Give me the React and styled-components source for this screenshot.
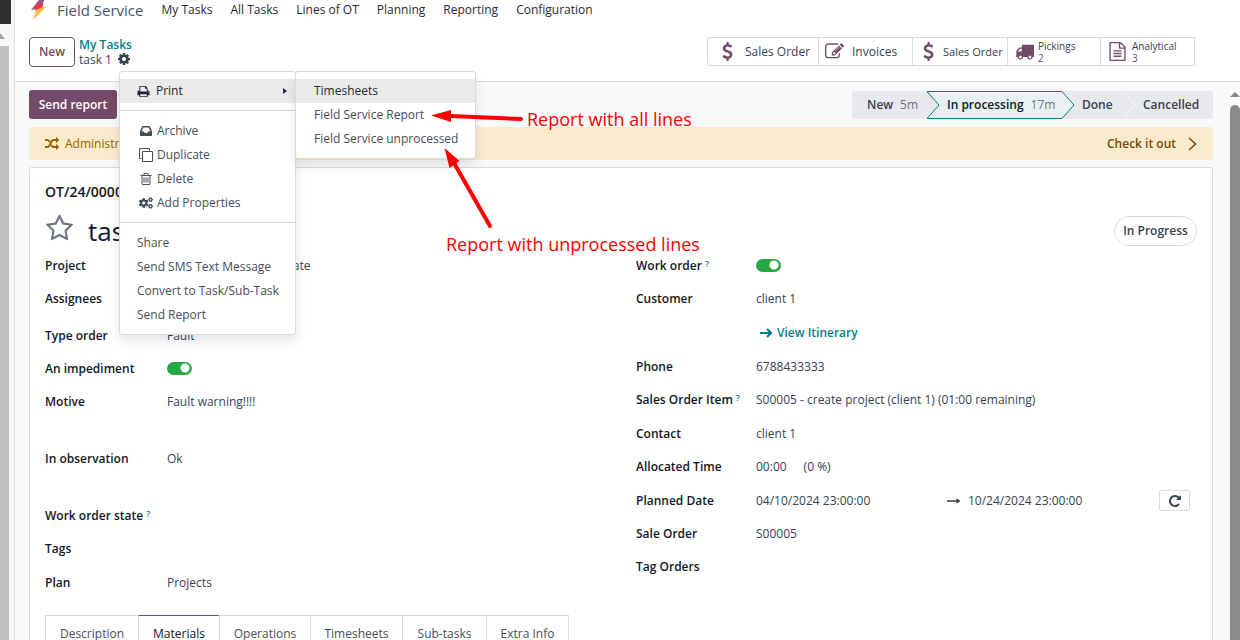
import React from "react";
import styled, { createGlobalStyle, css } from "styled-components";
import { FaCogs } from "react-icons/fa";

const GlobalStyle = createGlobalStyle`
  *, *::before, *::after { box-sizing: border-box; }
  body { margin: 0; background: #fff; }
  body, button, input { font-family: "Open Sans", "Noto Sans", sans-serif; font-size: 12px; line-height: 16px; color: #374151; }
  button { margin: 0; padding: 0; border: 0; background: none; cursor: pointer; white-space: nowrap; }
  a { color: inherit; text-decoration: none; }
  svg { display: block; flex: none; }
`;

const PATHS = {
  usd: "M1362 1185q0 153-99.5 263.5t-258.5 136.5v175q0 14-9 23t-23 9h-135q-13 0-22.5-9.5t-9.5-22.5v-175q-66-9-127.5-31t-101.5-44.5-74-48-46.5-37.5-17.5-18q-17-21-2-41l103-135q7-10 23-12 15-2 24 9l2 2q113 99 243 125 37 8 74 8 81 0 142.5-43t61.5-122q0-28-15-53t-33.5-42-58.5-37.5-66-32-80-32.5q-39-16-61.5-25t-61.5-26.5-62.5-31-56.5-35.5-53.5-42.5-43.5-49-35.5-58-21-66.5-8.5-78q0-138 98-242t255-134v-180q0-13 9.5-22.5t22.5-9.5h135q14 0 23 9t9 23v176q57 6 110.5 23t87 33.5 63.5 37.5 39 29 15 14q17 18 5 38l-81 146q-8 15-23 16-14 3-27-7-3-3-14.5-12t-39-26.5-58.5-32-74.5-26-85.5-11.5q-95 0-155 43t-60 111q0 26 8.5 48t29.5 41.5 39.5 33 56 31 60.5 27 70 27.5q53 20 81 31.5t76 35 75.5 42.5 62 50 53 63.5 31.5 76.5 13 94z",
  edit: "M888 1184l116-116-152-152-116 116v56h96v96h56zm440-720q-16-16-33 1l-350 350q-17 17-1 33t33-1l350-350q17-17 1-33zm80 594v190q0 119-84.5 203.5t-203.5 84.5h-832q-119 0-203.5-84.5t-84.5-203.5v-832q0-119 84.5-203.5t203.5-84.5h832q63 0 117 25 15 7 18 23 3 17-9 29l-49 49q-14 14-32 8-23-6-45-6h-832q-66 0-113 47t-47 113v832q0 66 47 113t113 47h832q66 0 113-47t47-113v-126q0-13 9-22l64-64q15-15 35-7t20 29zm-96-738l288 288-672 672h-288v-288zm444 132l-92 92-288-288 92-92q28-28 68-28t68 28l152 152q28 28 28 68t-28 68z",
  truck: "M640 1408q0-52-38-90t-90-38-90 38-38 90 38 90 90 38 90-38 38-90zm-384-512h384v-256h-158q-13 0-22 9l-195 195q-9 9-9 22v30zm1280 512q0-52-38-90t-90-38-90 38-38 90 38 90 90 38 90-38 38-90zm256-1088v1024q0 15-4 26.5t-13.5 18.5-16.5 11.5-23.5 6-22.5 2-25.5 0-22.5-.5q0 106-75 181t-181 75-181-75-75-181h-384q0 106-75 181t-181 75-181-75-75-181h-64q-3 0-22.5.5t-25.5 0-22.5-2-23.5-6-16.5-11.5-13.5-18.5-4-26.5q0-26 19-45t45-19v-320q0-8-.5-35t0-38 2.5-34.5 6.5-37 14-30.5 22.5-30l198-198q19-19 50.5-32t58.5-13h160v-192q0-26 19-45t45-19h1024q26 0 45 19t19 45z",
  file: "M1596 380q28 28 48 76t20 88v1152q0 40-28 68t-68 28h-1344q-40 0-68-28t-28-68v-1600q0-40 28-68t68-28h896q40 0 88 20t76 48zm-444-244v376h376q-10-29-22-41l-313-313q-12-12-41-22zm384 1528v-1024h-416q-40 0-68-28t-28-68v-416h-768v1536h1280zm-1024-864q0-14 9-23t23-9h704q14 0 23 9t9 23v64q0 14-9 23t-23 9h-704q-14 0-23-9t-9-23v-64zm736 224q14 0 23 9t9 23v64q0 14-9 23t-23 9h-704q-14 0-23-9t-9-23v-64q0-14 9-23t23-9h704zm0 256q14 0 23 9t9 23v64q0 14-9 23t-23 9h-704q-14 0-23-9t-9-23v-64q0-14 9-23t23-9h704z",
  cog: "M1152 896q0-106-75-181t-181-75-181 75-75 181 75 181 181 75 181-75 75-181zm512-109v222q0 12-8 23t-20 13l-185 28q-19 54-39 91 35 50 107 138 10 12 10 25t-9 23q-27 37-99 108t-94 71q-12 0-26-9l-138-108q-44 23-91 38-16 136-29 186-7 28-36 28h-222q-14 0-24.5-8.5t-11.5-21.5l-28-184q-49-16-90-37l-141 107q-10 9-25 9-14 0-25-11-126-114-165-168-7-10-7-23 0-12 8-23 15-21 51-66.5t54-70.5q-27-50-41-99l-183-27q-13-2-21-12.5t-8-23.5v-222q0-12 8-23t19-13l186-28q14-46 39-92-40-57-107-138-10-12-10-24 0-10 9-23 26-36 98.5-107.5t94.5-71.5q13 0 26 10l138 107q44-23 91-38 16-136 29-186 7-28 36-28h222q14 0 24.5 8.5t11.5 21.5l28 184q49 16 90 37l142-107q9-9 24-9 13 0 25 10 129 119 165 170 7 8 7 22 0 12-8 23-15 21-51 66.5t-54 70.5q26 50 41 98l183 28q13 2 21 12.5t8 23.5z",
  print: "M448 1536h896v-256h-896v256zm0-640h896v-384h-160q-40 0-68-28t-28-68v-160h-640v640zm1152 64q0-26-19-45t-45-19-45 19-19 45 19 45 45 19 45-19 19-45zm128 0v416q0 13-9.5 22.5t-22.5 9.5h-224v160q0 40-28 68t-68 28h-960q-40 0-68-28t-28-68v-160h-224q-13 0-22.5-9.5t-9.5-22.5v-416q0-79 56.5-135.5t135.5-56.5h64v-544q0-40 28-68t68-28h672q40 0 88 20t76 48l152 152q28 28 48 76t20 88v256h64q79 0 135.5 56.5t56.5 135.5z",
  inbox: "M1151 960h316q-1-3-2.5-8t-2.5-8l-212-496h-708l-212 496q-1 2-2.5 8t-2.5 8h316l95 192h320zm513 30v482q0 26-19 45t-45 19h-1408q-26 0-45-19t-19-45v-482q0-62 25-123l238-552q10-25 36.5-42t52.5-17h832q26 0 52.5 17t36.5 42l238 552q25 61 25 123z",
  clone: "M1664 1632v-1088q0-13-9.5-22.5t-22.5-9.5h-1088q-13 0-22.5 9.5t-9.5 22.5v1088q0 13 9.5 22.5t22.5 9.5h1088q13 0 22.5-9.5t9.5-22.5zm128-1088v1088q0 66-47 113t-113 47h-1088q-66 0-113-47t-47-113v-1088q0-66 47-113t113-47h1088q66 0 113 47t47 113zm-384-384v160h-128v-160q0-13-9.5-22.5t-22.5-9.5h-1088q-13 0-22.5 9.5t-9.5 22.5v1088q0 13 9.5 22.5t22.5 9.5h160v128h-160q-66 0-113-47t-47-113v-1088q0-66 47-113t113-47h1088q66 0 113 47t47 113z",
  trash: "M704 736v576q0 14-9 23t-23 9h-64q-14 0-23-9t-9-23v-576q0-14 9-23t23-9h64q14 0 23 9t9 23zm256 0v576q0 14-9 23t-23 9h-64q-14 0-23-9t-9-23v-576q0-14 9-23t23-9h64q14 0 23 9t9 23zm256 0v576q0 14-9 23t-23 9h-64q-14 0-23-9t-9-23v-576q0-14 9-23t23-9h64q14 0 23 9t9 23zm128 724v-948h-896v948q0 22 7 40.5t14.5 27 10.5 8.5h832q3 0 10.5-8.5t14.5-27 7-40.5zm-672-1076h448l-48-117q-7-9-17-11h-317q-10 2-17 11zm928 32v64q0 14-9 23t-23 9h-96v948q0 83-47 143.5t-113 60.5h-832q-66 0-113-58.5t-47-141.5v-952h-96q-14 0-23-9t-9-23v-64q0-14 9-23t23-9h309l70-167q15-37 54-63t79-26h320q40 0 79 26t54 63l70 167h309q14 0 23 9t9 23z",
  random: "M666 481q-60 92-137 273-22-45-37-72.5t-40.5-63.5-51-56.5-63-35-81.5-14.5h-224q-14 0-23-9t-9-23v-192q0-14 9-23t23-9h224q250 0 410 225zm1126 799q0 14-9 23l-320 320q-9 9-23 9-13 0-22.5-9.5t-9.5-22.5v-192q-32 0-85 .5t-81 1-73-1-71-5-64-10.5-63-18.5-58-28.5-59-40-55-53.5-56-69.5q59-93 136-273 22 45 37 72.5t40.5 63.5 51 56.5 63 35 81.5 14.5h256v-192q0-14 9-23t23-9q12 0 24 10l319 319q9 9 9 23zm0-896q0 14-9 23l-320 320q-9 9-23 9-13 0-22.5-9.5t-9.5-22.5v-192h-256q-48 0-87 15t-69 45-51 61.5-45 77.5q-32 62-78 171-29 66-49.5 111t-54 105-64 100-74 83-90 68.5-106.5 42-128 16.5h-224q-14 0-23-9t-9-23v-192q0-14 9-23t23-9h224q48 0 87-15t69-45 51-61.5 45-77.5q32-62 78-171 29-66 49.5-111t54-105 64-100 74-83 90-68.5 106.5-42 128-16.5h256v-192q0-14 9-23t23-9q12 0 24 10l319 319q9 9 9 23z",
  star: "M1201 1004l306-297-422-62-189-382-189 382-422 62 306 297-73 421 378-199 377 199zm527-357q0 22-26 48l-363 354 86 500q1 7 1 20 0 50-41 50-19 0-40-12l-449-236-449 236q-22 12-40 12-21 0-31.5-14.5t-10.5-35.5q0-6 2-20l86-500-364-354q-25-27-25-48 0-37 56-46l502-73 225-455q19-41 49-41t49 41l225 455 502 73q56 9 56 46z",
  repeat: "M1664 256v448q0 26-19 45t-45 19h-448q-42 0-59-40-17-39 14-69l138-138q-148-137-349-137-104 0-198.5 40.5t-163.5 109.5-109.5 163.5-40.5 198.5 40.5 198.5 109.5 163.5 163.5 109.5 198.5 40.5q119 0 225-52t179-147q7-10 23-12 15 0 25 9l137 138q9 8 9.5 20.5t-7.5 22.5q-109 132-264 204.5t-327 72.5q-156 0-298-61t-245-164-164-245-61-298 61-298 164-245 245-164 298-61q147 0 284.5 55.5t244.5 156.5l130-129q29-31 70-14 39 17 39 59z",
};

const Icon = ({ name, size = 14 }) => (
  <svg width={size} height={size} viewBox="0 0 1792 1792" fill="currentColor" aria-hidden="true">
    <path d={PATHS[name]} />
  </svg>
);

const Shell = styled.div`
  position: relative;
  display: flex;
  height: 100vh;
  overflow: hidden;
`;

const OuterRail = styled.div`
  flex: none;
  width: 15px;
  display: flex;
  flex-direction: column;
  background: #f7f7f8;
  border-right: 1px solid #dddfe2;
`;
const RailDark = styled.div`
  width: 11px;
  height: 24px;
  background: #2f2f2f;
`;
const RailArrow = styled.div`
  height: 22px;
  padding-top: 9px;
  color: #a3a3a3;
`;
const RailThumb = styled.div`
  flex: 1;
  width: 9px;
  background: #c1c1c1;
`;

const Page = styled.div`
  flex: 1;
  min-width: 0;
  display: flex;
  flex-direction: column;
`;

const NavBar = styled.nav`
  flex: none;
  height: 20px;
  padding: 0 15px;
  display: flex;
  align-items: center;
  gap: 18px;
  color: #1f2937;
`;
const Brand = styled.a`
  && { display: flex; }
  align-items: center;
  gap: 10px;
  height: 20px;
  font-size: 15px;
  line-height: 18px;
  color: #4b5563;
`;
const NavLink = styled.a`
  line-height: 20px;
  white-space: nowrap;
`;

const ControlPanel = styled.header`
  flex: none;
  height: 62px;
  padding: 2px 45px 0 14px;
  display: flex;
  align-items: center;
  justify-content: space-between;
  border-bottom: 1px solid #d8dadd;
`;
const PanelLeft = styled.div`
  display: flex;
  align-items: center;
  gap: 4px;
`;
const OutlineButton = styled.button`
  width: 46px;
  height: 30px;
  border: 1px solid #714b67;
  border-radius: 4px;
  color: #714b67;
  font-weight: 600;
`;
const Crumbs = styled.div`
  display: flex;
  flex-direction: column;
`;
const CrumbLink = styled.a`
  font-weight: 600;
  line-height: 15px;
  color: #017e84;
`;
const CrumbCurrent = styled.div`
  display: flex;
  align-items: center;
  gap: 5px;
  line-height: 15px;
`;
const MenuAnchor = styled.div`
  position: relative;
`;
const CogButton = styled.button`
  display: block;
  color: #374151;
`;

const popup = css`
  position: absolute;
  z-index: 5;
  background: #fff;
  border: 1px solid #d8dadd;
  border-radius: 3px;
  box-shadow: 0 6px 12px rgba(0, 0, 0, 0.1);
  padding: 7px 0;
`;
const Menu = styled.div`
  ${popup}
  top: 19px;
  left: 2px;
  width: 177px;
`;
const SubMenu = styled.div`
  ${popup}
  top: -1px;
  left: 175px;
  width: 181px;
`;
const MenuItem = styled.button`
  display: flex;
  align-items: center;
  gap: ${(p) => (p.$wide ? 6 : 4)}px;
  width: 100%;
  height: 24px;
  padding: 0 8px 0 ${(p) => (p.$icon ? 19 : p.$sub ? 18 : 17)}px;
  text-align: left;
  color: ${(p) => (p.$active ? "#1f2937" : "#454d5a")};
  background: ${(p) => (p.$active ? "#eaeaea" : "transparent")};
`;
const ItemText = styled.span`
  flex: 1;
`;
const Divider = styled.hr`
  margin: 7px 0 8px;
  border: 0;
  border-top: 1px solid #d8dadd;
`;

const StatButtons = styled.div`
  display: flex;
  height: 29px;
  border: 1px solid #d8dadd;
  border-radius: 3px 0 0 3px;
`;
const StatButton = styled.button`
  display: flex;
  align-items: center;
  gap: ${(p) => p.$gap}px;
  width: ${(p) => p.$width}px;
  padding-left: ${(p) => p.$pad}px;
  color: #374151;
  & + & { border-left: 1px solid #d8dadd; }
  svg { color: #714b67; }
`;
const StatLabel = styled.span`
  font-size: ${(p) => (p.$small ? 11 : 12)}px;
  line-height: 16px;
`;
const StatStack = styled.span`
  display: flex;
  flex-direction: column;
  align-items: flex-start;
  font-size: 10px;
  line-height: 12px;
`;
const StatCount = styled.span`
  color: #714b67;
`;

const Body = styled.div`
  flex: 1;
  min-height: 0;
  display: flex;
  background: #f8f9fb;
`;
const Content = styled.main`
  flex: 1;
  min-width: 0;
  padding: 8px 17px 0 14px;
  display: flex;
  flex-direction: column;
`;
const ScrollRail = styled.div`
  flex: none;
  width: 10px;
  padding-top: 10px;
  background: #fafbfb;
  color: #8b8b8b;
`;
const ScrollThumb = styled.div`
  height: 100%;
  margin-top: 8px;
  border-radius: 5px;
  background: #8b8b8b;
`;

const ActionRow = styled.div`
  flex: none;
  display: flex;
  align-items: center;
  justify-content: space-between;
`;
const PrimaryButton = styled.button`
  width: 88px;
  height: 29px;
  border-radius: 3px;
  background: #714b67;
  color: #fff;
  font-weight: 600;
`;
const StatusBar = styled.div`
  display: flex;
  height: 28px;
  border-radius: 3px;
  overflow: hidden;
  background: #e7e9ed;
`;
const Stage = styled.button`
  display: flex;
  align-items: center;
  gap: 7px;
  width: ${(p) => p.$width}px;
  padding-left: ${(p) => (p.$first ? 15 : 7)}px;
  font-weight: 600;
  color: ${(p) => (p.$active ? "#111827" : "#374151")};
  ${(p) => p.$active && css`
    background: #e6f2f3;
    border: solid #017e84;
    border-width: 1px 0;
  `}
`;
const StageTime = styled.span`
  font-weight: 400;
  color: #6b7280;
`;

const Banner = styled.div`
  flex: none;
  display: flex;
  align-items: center;
  gap: 6px;
  height: 33px;
  margin: 8px 0 7px;
  padding: 0 16px;
  border-radius: 3px;
  background: #fbebcc;
  color: #946500;
`;
const BannerText = styled.span`
  flex: 1;
`;
const BannerLink = styled.a`
  && { display: flex; }
  align-items: center;
  gap: 12px;
  font-weight: 600;
  color: #714d00;
`;

const Sheet = styled.section`
  flex: 1;
  min-height: 0;
  padding: 12px 15px 0;
  border: 1px solid #d8dadd;
  border-bottom: 0;
  border-radius: 3px 3px 0 0;
  background: #fff;
`;
const OrderCode = styled.div`
  font-size: 14px;
  font-weight: 600;
  line-height: 24px;
  color: #111827;
`;
const TitleRow = styled.div`
  display: flex;
  align-items: center;
  height: 45px;
  padding-top: 8px;
`;
const StarButton = styled.button`
  padding-bottom: 4px;
  color: #6b7280;
`;
const Title = styled.h1`
  flex: 1;
  margin: 0 0 0 14px;
  font-size: 26px;
  font-weight: 400;
  line-height: 36px;
  color: #111827;
`;
const StatePill = styled.button`
  width: 83px;
  height: 30px;
  border: 1px solid #d8dadd;
  border-radius: 15px;
  font-weight: 600;
`;

const Groups = styled.div`
  display: grid;
  grid-template-columns: 1fr 1fr;
  gap: 30px;
`;
const Group = styled.div`
  display: flex;
  flex-direction: column;
`;
const Field = styled.div`
  display: grid;
  grid-template-columns: ${(p) => (p.$right ? 120 : 122)}px 1fr;
  height: ${(p) => p.$height || 33}px;
  line-height: 33px;
`;
const FieldLabel = styled.label`
  font-weight: 600;
  color: #111827;
`;
const Help = styled.sup`
  margin-left: 3px;
  font-size: 9px;
  font-weight: 600;
  line-height: 0;
  vertical-align: 3px;
  color: #0180a5;
`;
const FieldValue = styled.div`
  display: flex;
  align-items: center;
  height: 33px;
  gap: ${(p) => p.$gap || 0}px;
`;
const Toggle = styled.input`
  appearance: none;
  width: 25px;
  height: 13px;
  margin: 0;
  border-radius: 7px;
  background: radial-gradient(circle at 18px 6px, #fff 4px, #28a745 5px);
`;
const ItineraryLink = styled.a`
  && { display: flex; }
  align-items: center;
  gap: 5px;
  padding-left: 4px;
  font-weight: 600;
  color: #017e84;
`;
const DateStart = styled.span`
  width: 184px;
`;
const DateEnd = styled.span`
  flex: 1;
`;
const RepeatButton = styled.button`
  display: flex;
  align-items: center;
  justify-content: center;
  width: 31px;
  height: 21px;
  margin-right: 7px;
  border: 1px solid #d8dadd;
  border-radius: 2px;
  color: #374151;
`;

const Tabs = styled.div`
  display: flex;
  margin-top: 16px;
`;
const Tab = styled.button`
  width: ${(p) => p.$width}px;
  height: 36px;
  border-top: 1px solid ${(p) => (p.$active ? "#714b67" : "#d8dadd")};
  border-left: 1px solid #d8dadd;
  color: ${(p) => (p.$active ? "#111827" : "#454d5a")};
  &:last-child { border-right: 1px solid #d8dadd; }
`;

const Note = styled.div`
  position: absolute;
  z-index: 8;
  left: ${(p) => p.$x}px;
  top: ${(p) => p.$y}px;
  font-size: 18px;
  line-height: 24px;
  white-space: nowrap;
  color: #f00;
`;
const Arrows = styled.svg`
  position: absolute;
  z-index: 8;
  left: 430px;
  top: 105px;
  pointer-events: none;
`;

const UpArrow = () => (
  <svg width="10" height="5" viewBox="0 0 10 5" fill="currentColor" aria-hidden="true"><path d="M5 0l5 5H0z" /></svg>
);

const Chevron = ({ left, right, line }) => (
  <svg width="13" height="28" viewBox="0 0 13 28" aria-hidden="true">
    <path d="M0 0L12.500 14L0 28z" fill={left} />
    <path d="M0 0L12.500 14L0 28H13V0z" fill={right} />
    {right === "#e6f2f3" && <path d="M0 .5H13M0 27.500H13" stroke={line} />}
    <path d="M0 .5L12 14L0 27.500" fill="none" stroke={line} />
  </svg>
);

const LongArrow = () => (
  <svg width="14" height="10" viewBox="0 0 14 10" fill="currentColor" aria-hidden="true"><path d="M0 4.200h9.500V2.200L13.500 5 9.500 7.800V5.800H0z" /></svg>
);

const FieldRow = ({ label, help, children, right, height, gap, id }) => (
  <Field $right={right} $height={height}>
    <FieldLabel htmlFor={id}>{label}{help && <Help>?</Help>}</FieldLabel>
    <FieldValue $gap={gap}>{children}</FieldValue>
  </Field>
);

const NAV = ["My Tasks", "All Tasks", "Lines of OT", "Planning", "Reporting", "Configuration"];
const TABS = [["Description", 93], ["Materials", 81], ["Operations", 91], ["Timesheets", 92], ["Sub-tasks", 84], ["Extra Info", 83]];

export default function App() {
  return (
    <Shell>
      <GlobalStyle />
      <OuterRail>
        <RailDark />
        <RailArrow>
          <svg width="6" height="6" viewBox="0 0 6 6" fill="currentColor"><path d="M0 0L5 6H0z" /></svg>
        </RailArrow>
        <RailThumb />
      </OuterRail>
      <Page>
        <NavBar>
          <Brand href="#">
            <svg width="17" height="20" viewBox="0 0 17 20" aria-hidden="true">
              <path d="M9 0H14L12 8L1 10z" fill="#985184" />
              <path d="M5 5L13 3L12 9L5 11z" fill="#f0304c" />
              <path d="M5 10L13 7H16L3 20L6 11z" fill="#fbb945" />
            </svg>
            Field Service
          </Brand>
          {NAV.map((n) => <NavLink key={n} href="#">{n}</NavLink>)}
        </NavBar>
        <ControlPanel>
          <PanelLeft>
            <OutlineButton>New</OutlineButton>
            <Crumbs>
              <CrumbLink href="#">My Tasks</CrumbLink>
              <CrumbCurrent>
                task 1
                <MenuAnchor>
                  <CogButton aria-label="Actions"><Icon name="cog" /></CogButton>
                  <Menu>
                    <MenuItem $active $wide>
                      <Icon name="print" size={13} />
                      <ItemText>Print</ItemText>
                      <svg width="4" height="8" viewBox="0 0 4 8" fill="currentColor"><path d="M0 1l4 3-4 3z" /></svg>
                    </MenuItem>
                    <Divider />
                    <MenuItem $icon><Icon name="inbox" /><ItemText>Archive</ItemText></MenuItem>
                    <MenuItem $icon><Icon name="clone" /><ItemText>Duplicate</ItemText></MenuItem>
                    <MenuItem $icon><Icon name="trash" /><ItemText>Delete</ItemText></MenuItem>
                    <MenuItem $icon><FaCogs size={14} /><ItemText>Add Properties</ItemText></MenuItem>
                    <Divider />
                    <MenuItem>Share</MenuItem>
                    <MenuItem>Send SMS Text Message</MenuItem>
                    <MenuItem>Convert to Task/Sub-Task</MenuItem>
                    <MenuItem>Send Report</MenuItem>
                    <SubMenu>
                      <MenuItem $sub $active>Timesheets</MenuItem>
                      <MenuItem $sub>Field Service Report</MenuItem>
                      <MenuItem $sub>Field Service unprocessed</MenuItem>
                    </SubMenu>
                  </Menu>
                </MenuAnchor>
              </CrumbCurrent>
            </Crumbs>
          </PanelLeft>
          <StatButtons>
            <StatButton $width={110} $pad={10} $gap={8}><Icon name="usd" size={19} /><StatLabel>Sales Order</StatLabel></StatButton>
            <StatButton $width={94} $pad={6} $gap={8}><Icon name="edit" size={19} /><StatLabel>Invoices</StatLabel></StatButton>
            <StatButton $width={95} $pad={6} $gap={5}><Icon name="usd" size={19} /><StatLabel $small>Sales Order</StatLabel></StatButton>
            <StatButton $width={93} $pad={7} $gap={4}>
              <Icon name="truck" size={19} />
              <StatStack><span>Pickings</span><StatCount>2</StatCount></StatStack>
            </StatButton>
            <StatButton $width={94} $pad={7} $gap={5}>
              <Icon name="file" size={19} />
              <StatStack><span>Analytical</span><StatCount>3</StatCount></StatStack>
            </StatButton>
          </StatButtons>
        </ControlPanel>
        <Body>
          <Content>
            <ActionRow>
              <PrimaryButton>Send report</PrimaryButton>
              <StatusBar>
                <Stage $first $width={75}>New <StageTime>5m</StageTime></Stage>
                <Chevron left="#e7e9ed" right="#e6f2f3" line="#017e84" />
                <Stage $active $width={122}>In processing <StageTime>17m</StageTime></Stage>
                <Chevron left="#e6f2f3" right="#e7e9ed" line="#017e84" />
                <Stage $width={48}>Done</Stage>
                <Chevron left="#e7e9ed" right="#e7e9ed" line="#f8f9fb" />
                <Stage $width={77}>Cancelled</Stage>
              </StatusBar>
            </ActionRow>
            <Banner>
              <Icon name="random" />
              <BannerText>Administrator</BannerText>
              <BannerLink href="#">
                Check it out
                <svg width="9" height="14" viewBox="0 0 9 14" fill="none" stroke="currentColor" strokeWidth="1.500"><path d="M1 1l6.500 6L1 13" /></svg>
              </BannerLink>
            </Banner>
            <Sheet>
              <OrderCode>OT/24/00001</OrderCode>
              <TitleRow>
                <StarButton aria-label="Priority"><Icon name="star" size={29} /></StarButton>
                <Title>task 1</Title>
                <StatePill>In Progress</StatePill>
              </TitleRow>
              <Groups>
                <Group>
                  <FieldRow label="Project">S00005 - Project template</FieldRow>
                  <FieldRow label="Assignees" height={37} />
                  <FieldRow label="Type order">Fault</FieldRow>
                  <FieldRow label="An impediment" id="impediment"><Toggle id="impediment" type="checkbox" defaultChecked /></FieldRow>
                  <FieldRow label="Motive" height={57}>Fault warning!!!!</FieldRow>
                  <FieldRow label="In observation" height={57}>Ok</FieldRow>
                  <FieldRow label="Work order state" help />
                  <FieldRow label="Tags" height={34} />
                  <FieldRow label="Plan">Projects</FieldRow>
                </Group>
                <Group>
                  <FieldRow right label="Work order" help id="workorder"><Toggle id="workorder" type="checkbox" defaultChecked /></FieldRow>
                  <FieldRow right label="Customer" height={34}>client 1</FieldRow>
                  <FieldRow right height={34}>
                    <ItineraryLink href="#">
                      <svg width="12" height="10" viewBox="0 0 12 10" fill="none" stroke="currentColor" strokeWidth="2"><path d="M0 5h11M7 1l4 4-4 4" /></svg>
                      View Itinerary
                    </ItineraryLink>
                  </FieldRow>
                  <FieldRow right label="Phone">6788433333</FieldRow>
                  <FieldRow right label="Sales Order Item" help height={34}>S00005 - create project (client 1) (01:00 remaining)</FieldRow>
                  <FieldRow right label="Contact">client 1</FieldRow>
                  <FieldRow right label="Allocated Time" height={34} gap={17}><span>00:00</span><span>(0 %)</span></FieldRow>
                  <FieldRow right label="Planned Date" gap={7}>
                    <DateStart>04/10/2024 23:00:00</DateStart>
                    <LongArrow />
                    <DateEnd>10/24/2024 23:00:00</DateEnd>
                    <RepeatButton aria-label="Recurrence"><Icon name="repeat" /></RepeatButton>
                  </FieldRow>
                  <FieldRow right label="Sale Order">S00005</FieldRow>
                  <FieldRow right label="Tag Orders" />
                </Group>
              </Groups>
              <Tabs role="tablist">
                {TABS.map(([t, w]) => <Tab key={t} role="tab" $width={w} $active={t === "Materials"}>{t}</Tab>)}
              </Tabs>
            </Sheet>
          </Content>
          <ScrollRail>
            <UpArrow />
            <ScrollThumb />
          </ScrollRail>
        </Body>
      </Page>
      <Note $x={527} $y={107}>Report with all lines</Note>
      <Note $x={446} $y={232}>Report with unprocessed lines</Note>
      <Arrows width="100" height="130" viewBox="0 0 100 130" fill="#f00" stroke="#f00">
        <path d="M20 11L91 14" strokeWidth="4" strokeLinecap="round" />
        <path d="M1 10.500L21 5V17z" stroke="none" />
        <path d="M24 58L60 121" strokeWidth="4" strokeLinecap="round" />
        <path d="M14.500 43L29.500 56L19.500 63z" stroke="none" />
      </Arrows>
    </Shell>
  );
}
